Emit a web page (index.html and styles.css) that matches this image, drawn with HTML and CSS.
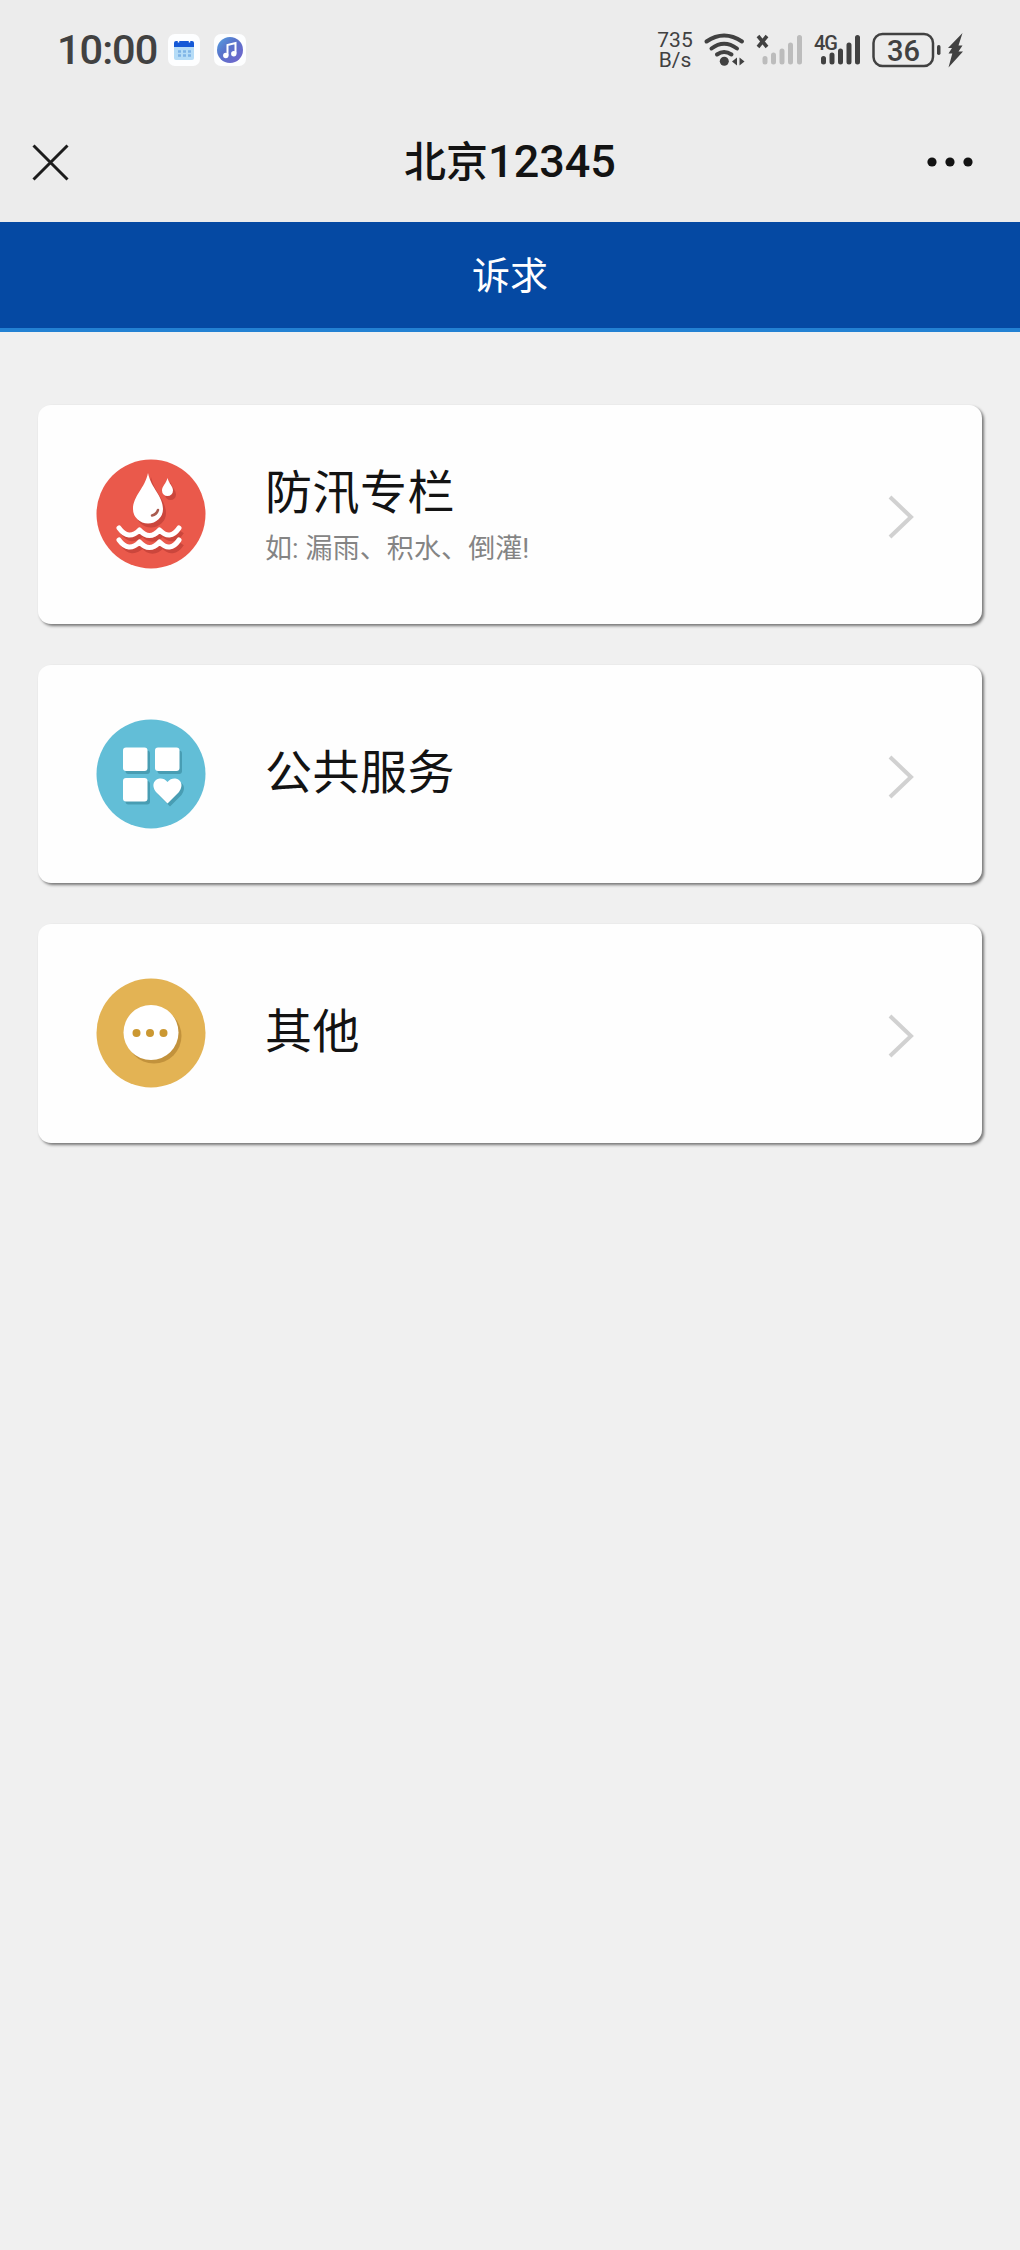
FILE: index.html
```html
<!DOCTYPE html>
<html lang="zh-CN">
<head>
    <meta charset="UTF-8">
    <meta name="viewport" content="width=device-width, initial-scale=1.0">
    <title>北京12345</title>
    <link rel="stylesheet" href="styles.css">
</head>
<body>
    <!-- Status bar -->
    <div class="status-bar">
        <div class="status-left">
            <span class="time">10:00</span>
            <svg class="app-icon" width="32" height="32" viewBox="0 0 32 32">
                <rect width="32" height="32" rx="7" fill="#fdfeff"/>
                <rect x="6" y="8" width="20" height="18" rx="2" fill="#b5dcf7"/>
                <path d="M6 13V9a2 2 0 0 1 2-2h16a2 2 0 0 1 2 2v4z" fill="#1559d6"/>
                <path d="M10.500 5.500v3M21.500 5.500v3" stroke="#fdfeff" stroke-width="1.500"/>
                <path d="M10 17.500h13M10 21.500h13" stroke="#7fb4e6" stroke-width="2.500" stroke-dasharray="3 2"/>
            </svg>
            <svg class="app-icon music" width="32" height="32" viewBox="0 0 32 32">
                <defs>
                    <linearGradient id="musicBg" x1="0" y1="0" x2="1" y2="1">
                        <stop offset="0" stop-color="#55a2e2"/>
                        <stop offset="0.4" stop-color="#5874cb"/>
                        <stop offset="1" stop-color="#7463cc"/>
                    </linearGradient>
                </defs>
                <rect width="32" height="32" rx="7" fill="#fdfeff"/>
                <circle cx="16" cy="16" r="13" fill="url(#musicBg)"/>
                <path d="M13.500 21.500V11l8-2v10.500" fill="none" stroke="#fff" stroke-width="2"/>
                <circle cx="11.800" cy="21.500" r="2.700" fill="#fff"/>
                <circle cx="19.800" cy="19.800" r="2.700" fill="#fff"/>
            </svg>
        </div>
        <div class="status-right">
            <div class="speed">735<br>B/s</div>
            <svg class="wifi" width="41" height="34" viewBox="0 0 41 34">
                <g fill="none" stroke="#414141" stroke-width="4" stroke-linecap="round">
                    <path d="M2.500 8.500Q20 -3.500 38 8.500"/>
                    <path d="M7.500 15.500Q20 6 33 15.500"/>
                    <path d="M13 21.500Q20 16.500 27.500 21.500"/>
                </g>
                <circle cx="20.300" cy="28.300" r="4.500" fill="#414141"/>
                <path d="M28 28.500l5-4v8zM40.500 28.500l-5-4v8z" fill="#414141"/>
            </svg>
            <svg class="signal" width="47" height="34" viewBox="0 0 47 34">
                <path d="M2 3l9 11M11 3L2 14" stroke="#414141" stroke-width="3.600"/>
                <path d="M9 25.500V29M17.500 22V29M26 18V29M34.500 12V29M43.500 4.500V29" stroke="#bcbcbc" stroke-width="5" stroke-linecap="round"/>
            </svg>
            <svg class="signal-4g" width="47" height="34" viewBox="0 0 47 34">
                <text x="0" y="17" class="net-type">4G</text>
                <path d="M9.500 25.500V29M18 22V29M26.500 18V29M35 12V29M43.500 4.500V29" stroke="#414141" stroke-width="5" stroke-linecap="round"/>
            </svg>
            <svg class="battery" width="92" height="36" viewBox="0 0 92 36">
                <rect x="1.500" y="2" width="59.500" height="32" rx="9" fill="none" stroke="#414141" stroke-width="2.500"/>
                <text x="31.500" y="28.500" text-anchor="middle" class="level">36</text>
                <rect x="65" y="13" width="3.500" height="10" rx="1.700" fill="#414141"/>
                <path d="M90.500 1L76 16h4l-3.500 5.500h3.800L76.500 35.500L91 19.500h-4.500l4-6h-4z" fill="#414141"/>
            </svg>
        </div>
    </div>

    <!-- Title bar -->
    <div class="nav-bar">
        <svg width="37" height="37" viewBox="0 0 37 37">
            <path d="M1.500 1.500l34 34M35.500 1.500l-34 34" stroke="#1c1c1c" stroke-width="3"/>
        </svg>
        <h1 class="nav-title">北京<span>12345</span></h1>
        <svg width="48" height="12" viewBox="0 0 48 12" fill="#131313">
            <circle cx="6" cy="6" r="4.600"/>
            <circle cx="24" cy="6" r="4.600"/>
            <circle cx="42" cy="6" r="4.600"/>
        </svg>
    </div>

    <div class="tab-header">诉求</div>

    <div class="card-list">
        <div class="card">
            <svg class="card-icon" width="110" height="110" viewBox="0 0 110 110">
                <circle cx="55" cy="55" r="54.500" fill="#ea594b"/>
                <g transform="translate(3 4)" fill="#cb463c">
                    <path d="M52 14C55 29 67 37 67 50A15 14.500 0 0 1 37 50C37 37 49 29 52 14z"/>
                    <path d="M71.500 19C73 25 77 27 77 31.500A5.500 5.500 0 0 1 66 31.500C66 27 70 25 71.500 19z"/>
                    <path d="M23 69Q32.500 82 43.500 71Q53.500 82 63.500 71Q74 82 83 69M23 81Q32.500 94 43.500 83Q53.500 94 63.500 83Q74 94 83 81" fill="none" stroke="#cb463c" stroke-width="4.500"/>
                </g>
                <g fill="#fff">
                    <path d="M52 14C55 29 67 37 67 50A15 14.500 0 0 1 37 50C37 37 49 29 52 14z"/>
                    <path d="M71.500 19C73 25 77 27 77 31.500A5.500 5.500 0 0 1 66 31.500C66 27 70 25 71.500 19z"/>
                </g>
                <path d="M23 69Q32.500 82 43.500 71Q53.500 82 63.500 71Q74 82 83 69M23 81Q32.500 94 43.500 83Q53.500 94 63.500 83Q74 94 83 81" fill="none" stroke="#fff" stroke-width="5" stroke-linecap="round" stroke-linejoin="round"/>
                <path d="M62 51Q60.500 55.500 56 56.500" fill="none" stroke="#a95b4f" stroke-width="2.500" stroke-linecap="round"/>
            </svg>
            <div class="card-text">
                <div class="card-title">防汛专栏</div>
                <div class="card-desc">如: 漏雨、积水、倒灌!</div>
            </div>
            <svg class="arrow" width="27" height="44" viewBox="0 0 27 44">
                <path d="M2 2l21 20L2 42" fill="none" stroke="#d1d1d1" stroke-width="4"/>
            </svg>
        </div>

        <div class="card">
            <svg class="card-icon" width="110" height="110" viewBox="0 0 110 110">
                <circle cx="55" cy="55" r="54.500" fill="#62bed7"/>
                <g transform="translate(2.500 3)" fill="#489db3">
                    <rect x="27" y="28.500" width="24.500" height="23.500" rx="3"/>
                    <rect x="59" y="28.500" width="24.500" height="23.500" rx="3"/>
                    <rect x="27" y="59" width="24.500" height="23.500" rx="3"/>
                    <path d="M71.500 84.500L60 73C52 62 65 55 71.500 63C78 55 91 62 83 73z"/>
                </g>
                <g fill="#fff">
                    <rect x="27" y="28.500" width="24.500" height="23.500" rx="3"/>
                    <rect x="59" y="28.500" width="24.500" height="23.500" rx="3"/>
                    <rect x="27" y="59" width="24.500" height="23.500" rx="3"/>
                    <path d="M71.500 84.500L60 73C52 62 65 55 71.500 63C78 55 91 62 83 73z"/>
                </g>
            </svg>
            <div class="card-text">
                <div class="card-title">公共服务</div>
            </div>
            <svg class="arrow" width="27" height="44" viewBox="0 0 27 44">
                <path d="M2 2l21 20L2 42" fill="none" stroke="#d1d1d1" stroke-width="4"/>
            </svg>
        </div>

        <div class="card">
            <svg class="card-icon" width="110" height="110" viewBox="0 0 110 110">
                <circle cx="55" cy="55" r="54.500" fill="#e3b354"/>
                <circle cx="58" cy="58" r="27.500" fill="#c2923c"/>
                <circle cx="55" cy="54.500" r="27.500" fill="#fff"/>
                <g fill="#cb9832">
                    <circle cx="40.500" cy="55" r="4"/>
                    <circle cx="54" cy="55" r="4"/>
                    <circle cx="67.500" cy="55" r="4"/>
                </g>
            </svg>
            <div class="card-text">
                <div class="card-title">其他</div>
            </div>
            <svg class="arrow" width="27" height="44" viewBox="0 0 27 44">
                <path d="M2 2l21 20L2 42" fill="none" stroke="#d1d1d1" stroke-width="4"/>
            </svg>
        </div>
    </div>
</body>
</html>
```
FILE: styles.css
```css
body {
    margin: 0;
    min-height: 100vh;
    background-color: #f0f0f0;
    font-family: Roboto, "Noto Sans CJK SC", sans-serif;
    color: #131313;
}

svg {
    display: block;
    flex-shrink: 0;
    overflow: visible;
}

/* Status bar */
.status-bar {
    height: 100px;
    box-sizing: border-box;
    padding: 0 56px 0 57px;
    background-color: #ececec;
    display: flex;
    align-items: center;
    justify-content: space-between;
    color: #414141;
}

.status-left,
.status-right {
    display: flex;
    align-items: center;
}

.time {
    width: 111px;
    font-size: 41.5px;
    line-height: 50px;
    font-weight: 500;
    letter-spacing: -1px;
}

.app-icon.music {
    margin-left: 14px;
}

.speed {
    width: 36px;
    font-size: 21px;
    line-height: 20px;
    text-align: center;
}

.wifi {
    margin-left: 11px;
}

.signal,
.signal-4g {
    margin-left: 11px;
}

.battery {
    margin-left: 11px;
}

.net-type {
    font-size: 20px;
    font-weight: 500;
    fill: #414141;
    letter-spacing: -1px;
}

.level {
    font-size: 29px;
    font-weight: 500;
    fill: #414141;
}

/* Title bar */
.nav-bar {
    height: 122px;
    box-sizing: border-box;
    padding: 2px 46px 0 32px;
    background-color: #ececec;
    display: flex;
    align-items: center;
    justify-content: space-between;
}

.nav-title {
    flex: 1;
    margin: 0;
    padding-left: 25px;
    font-size: 42px;
    line-height: 60px;
    font-weight: 500;
    text-align: center;
}

.nav-title span {
    font-size: 45px;
}

.tab-header {
    height: 106px;
    background-color: #0549a3;
    border-bottom: 4px solid #2381d3;
    color: #fff;
    font-size: 38px;
    line-height: 108px;
    text-align: center;
}

/* Cards */
.card-list {
    padding: 73px 38px 0 38px;
    display: flex;
    flex-direction: column;
    gap: 41px;
}

.card {
    height: 218.500px;
    box-sizing: border-box;
    padding: 0 67px 0 58px;
    background-color: #fefefe;
    border-radius: 13px;
    box-shadow: 2px 2px 3px #777;
    display: flex;
    align-items: center;
}

.card-text {
    flex: 1;
    margin-left: 59px;
}

.card-title {
    font-size: 47px;
    line-height: 62px;
    letter-spacing: 0.5px;
    margin-top: -2px;
}

.card-desc {
    margin: 5px 0 -4px;
    font-size: 27px;
    line-height: 40px;
    letter-spacing: 0.1px;
    color: #848484;
}

.arrow {
    margin-top: 6px;
}
```
